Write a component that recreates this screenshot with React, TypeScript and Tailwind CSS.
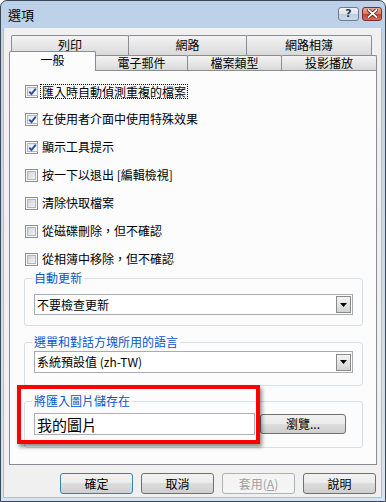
import React from 'react';

const FONT = "font-['Noto_Sans_CJK_TC','Noto_Sans_CJK_SC',sans-serif]";

function CheckBox({ checked }: { checked?: boolean }) {
  return (
    <span className="w-[13px] h-[13px] border border-[#8e8f8f] bg-[#f6f6f6] p-px flex shrink-0">
      <span
        className={
          'flex-1 border border-[#b3b7bd] flex items-center justify-center ' +
          (checked ? 'bg-gradient-to-br from-[#e4e6ea] to-[#ffffff]' : 'bg-gradient-to-br from-[#cfd2d7] to-[#f4f4f4]')
        }
      >
        {checked && (
          <svg width="9" height="9" viewBox="0 0 9 9">
            <path d="M1.2 4.6 L3.5 7 L7.8 1.6" stroke="#2a4ea6" strokeWidth="1.9" fill="none" />
          </svg>
        )}
      </span>
    </span>
  );
}

function CheckRow({ label, checked, focused }: { label: string; checked?: boolean; focused?: boolean }) {
  return (
    <div className="h-[28px] flex items-center pl-[15px]">
      <CheckBox checked={checked} />
      {focused ? (
        <span className="ml-[2px] px-px border border-dotted border-black text-[12px] leading-[13px] text-black">{label}</span>
      ) : (
        <span className="ml-[4px] text-[12px] leading-[14px] text-black">{label}</span>
      )}
    </div>
  );
}

function Group({ title, className, children }: { title: string; className: string; children: React.ReactNode }) {
  return (
    <div className={'relative ml-[14px] w-[339px] border border-[#d5dfe5] rounded-[3px] px-[9px] ' + className}>
      <span className="absolute -top-[8px] left-[7px] px-[2px] bg-[#fcfcfc] text-[12px] leading-[14px] text-[#0a56c8]">
        {title}
      </span>
      {children}
    </div>
  );
}

function Select({ value, h }: { value: string; h: string }) {
  return (
    <div className={'border border-[#a5acb5] bg-white flex items-center pl-[2px] pr-px ' + h}>
      <span className="flex-1 text-[12px] leading-[14px] text-black">{value}</span>
      <span className="w-[15px] h-[17px] border border-[#8a8a8a] bg-gradient-to-b from-[#f4f4f4] to-[#d3d3d3] flex items-center justify-center">
        <svg width="7" height="4" viewBox="0 0 7 4">
          <path d="M0 0h7L3.5 4z" fill="#000" />
        </svg>
      </span>
    </div>
  );
}

function Button({ children, primary, disabled, className = '' }: { children: React.ReactNode; primary?: boolean; disabled?: boolean; className?: string }) {
  const border = primary ? 'border-[#3c7fb1]' : disabled ? 'border-[#adb2b5]' : 'border-[#707070]';
  const bg = disabled
    ? 'bg-[#f4f4f4]'
    : 'bg-[linear-gradient(#f2f2f2_0%,#ebebeb_50%,#dddddd_50%,#cfcfcf_100%)]';
  return (
    <div
      className={
        'border rounded-[3px] flex items-center justify-center text-[12px] leading-[14px] ' +
        border + ' ' + bg + ' ' + (disabled ? 'text-[#a0a0a0] ' : 'text-black ') + className
      }
    >
      {children}
    </div>
  );
}

const tabBack =
  'border border-[#898c95] border-b-0 rounded-t-[2px] bg-gradient-to-b from-[#f4f4f4] to-[#d9d9d9] text-[12px] leading-[14px] text-black flex justify-center';

export default function App() {
  return (
    <div className={'w-[386px] h-[502px] ' + FONT}>
      <div className="w-full h-full border border-[#3e4756] rounded-t-[7px] bg-gradient-to-b from-[#bcd1e8] to-[#d5e3f1] pl-[2px] pr-[3px] pb-[3px] flex flex-col">
        {/* title bar */}
        <div className="h-[27px] flex items-center justify-between pl-[5px]">
          <span className="text-[13px] leading-[15px] text-black">選項</span>
          <div className="flex gap-[3px] -mt-[2px]">
            <div className="w-[21px] h-[14px] rounded-[3px] border border-[#6d7c90] bg-[linear-gradient(#eef3f9_0%,#d9e3ee_50%,#bfcfe0_50%,#cad9e9_100%)] flex items-center justify-center">
              <span className="text-[11px] leading-[11px] font-bold text-[#2d3a4c] font-['DejaVu_Sans',sans-serif]">?</span>
            </div>
            <div className="w-[20px] h-[14px] rounded-[3px] border border-[#7a2c2c] bg-[linear-gradient(#e9a99a_0%,#d7765f_50%,#c2452b_50%,#d66b52_100%)] flex items-center justify-center">
              <svg width="11" height="9" viewBox="0 0 11 9">
                <path d="M1.5 1 L9.5 8 M9.5 1 L1.5 8" stroke="#4a1c14" strokeWidth="3.4" strokeLinecap="square" />
                <path d="M1.5 1 L9.5 8 M9.5 1 L1.5 8" stroke="#ffffff" strokeWidth="1.8" strokeLinecap="square" />
              </svg>
            </div>
          </div>
        </div>

        {/* client area */}
        <div className="flex-1 bg-[#f0f0f0] border border-[#9fc4e3] border-t-0 pl-[5px] pt-[7px] flex flex-col">
          {/* tabs */}
          <div className="flex ml-[2px] h-[20px]">
            <div className={tabBack + ' w-[118px] pt-[2px]'}>列印</div>
            <div className={tabBack + ' w-[119px] -ml-px pt-[2px]'}>網路</div>
            <div className={tabBack + ' w-[126px] -ml-px pt-[2px]'}>網路相簿</div>
          </div>
          <div className="flex items-end h-[19px] -mt-[4px] relative z-10">
            <div className="w-[87px] h-[20px] -mb-px border border-[#898c95] border-b-0 rounded-t-[2px] bg-[#fcfcfc] text-[12px] leading-[14px] text-black flex justify-center pt-px">
              一般
            </div>
            <div className={tabBack + ' w-[93px] h-[15px] -ml-px items-center'}>電子郵件</div>
            <div className={tabBack + ' w-[95px] h-[15px] -ml-px items-center'}>檔案類型</div>
            <div className={tabBack + ' w-[96px] h-[15px] -ml-px items-center'}>投影播放</div>
          </div>

          {/* panel */}
          <div className="relative w-[368px] h-[395px] border border-[#898c95] bg-[#fcfcfc] pt-[6px]">
            <CheckRow label="匯入時自動偵測重複的檔案" checked focused />
            <CheckRow label="在使用者介面中使用特殊效果" checked />
            <CheckRow label="顯示工具提示" checked />
            <CheckRow label="按一下以退出 [編輯檢視]" />
            <CheckRow label="清除快取檔案" />
            <CheckRow label="從磁碟刪除，但不確認" />
            <CheckRow label="從相簿中移除，但不確認" />

            <Group title="自動更新" className="mt-[5px] pt-[15px] pb-[10px]">
              <Select value="不要檢查更新" h="h-[21px]" />
            </Group>

            <Group title="選單和對話方塊所用的語言" className="mt-[16px] pt-[8px] pb-[12px]">
              <Select value="系統預設值 (zh-TW)" h="h-[22px]" />
            </Group>

            <Group title="將匯入圖片儲存在" className="mt-[15px] pt-[11px] pb-[12px]">
              <div className="flex items-center">
                <div className="w-[221px] h-[22px] border border-[#abadb3] bg-white flex items-center pl-[2px]">
                  <span className="text-[15px] leading-[17px] text-black">我的圖片</span>
                </div>
                <Button className="ml-[5px] w-[86px] h-[20px]">瀏覽...</Button>
              </div>
            </Group>

            {/* red highlight */}
            <div className="absolute left-[7px] top-[314px] w-[243px] h-[59px] border-[4px] border-[#ff0000] shadow-[2px_3px_4px_rgba(0,0,0,0.45)]" />
          </div>

          {/* bottom buttons */}
          <div className="w-[368px] mt-[8px] flex justify-end gap-[8px] pr-px">
            <Button primary className="w-[73px] h-[21px]">確定</Button>
            <Button className="w-[73px] h-[21px]">取消</Button>
            <Button disabled className="w-[73px] h-[21px]">
              套用(<span className="underline">A</span>)
            </Button>
            <Button className="w-[73px] h-[21px]">說明</Button>
          </div>
        </div>
      </div>
    </div>
  );
}
